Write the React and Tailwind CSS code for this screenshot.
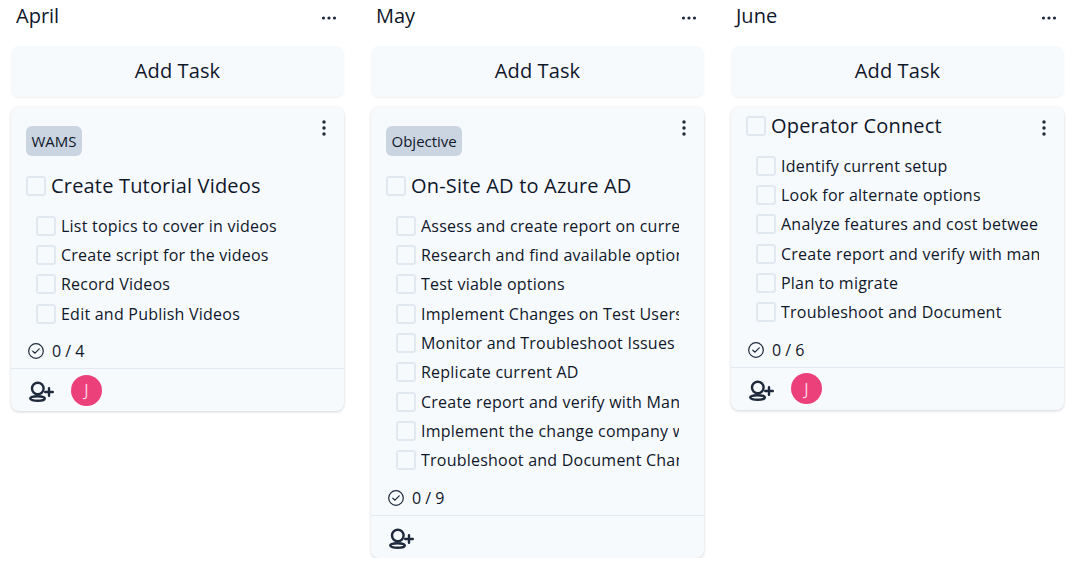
import { useState } from 'react';

const columns = [
  {
    name: 'April',
    task: {
      tag: 'WAMS',
      title: 'Create Tutorial Videos',
      items: ['List topics to cover in videos', 'Create script for the videos', 'Record Videos', 'Edit and Publish Videos'],
      assigned: true,
    },
  },
  {
    name: 'May',
    task: {
      tag: 'Objective',
      title: 'On-Site AD to Azure AD',
      items: [
        'Assess and create report on current setup',
        'Research and find available options',
        'Test viable options',
        'Implement Changes on Test Users',
        'Monitor and Troubleshoot Issues',
        'Replicate current AD',
        'Create report and verify with Management',
        'Implement the change company wide',
        'Troubleshoot and Document Changes',
      ],
      assigned: false,
    },
  },
  {
    name: 'June',
    task: {
      title: 'Operator Connect',
      items: [
        'Identify current setup',
        'Look for alternate options',
        'Analyze features and cost between',
        'Create report and verify with management',
        'Plan to migrate',
        'Troubleshoot and Document',
      ],
      assigned: true,
    },
  },
];

function Box() {
  return <span className="h-5 w-5 shrink-0 rounded-[3px] border-2 border-[#e2e8f0] bg-[#f7fafd]" />;
}

function DotsH() {
  return (
    <svg width="16" height="4" viewBox="0 0 16 4" fill="#1e293b">
      <circle cx="2.5" cy="2" r="1.6" />
      <circle cx="8" cy="2" r="1.6" />
      <circle cx="13.5" cy="2" r="1.6" />
    </svg>
  );
}

function DotsV() {
  return (
    <svg width="4" height="16" viewBox="0 0 4 16" fill="#1e293b">
      <circle cx="2" cy="2" r="1.7" />
      <circle cx="2" cy="8" r="1.7" />
      <circle cx="2" cy="14" r="1.7" />
    </svg>
  );
}

function CheckCircle() {
  return (
    <svg width="16" height="16" viewBox="0 0 16 16" fill="none" stroke="#1e293b" strokeWidth="1.2" strokeLinecap="round" strokeLinejoin="round">
      <circle cx="8" cy="8" r="7.3" />
      <path d="M4.8 8.2 7 10.2 11.2 5.8" />
    </svg>
  );
}

function UserPlus() {
  return (
    <svg width="24" height="24" viewBox="0 0 24 24" fill="none" stroke="#1e293b" strokeWidth="2.4" strokeLinecap="round" className="overflow-visible">
      <circle cx="8.8" cy="10.5" r="5.8" />
      <ellipse cx="8.5" cy="20.5" rx="7.3" ry="2.3" />
      <path d="M20 10.2v7.6M16.2 14h7.6" />
    </svg>
  );
}

function TaskCard({ task }) {
  return (
    <div className="relative rounded-lg bg-[#f7fafd] shadow-[0_1px_3px_rgba(15,23,42,0.18)]">
      <button className="absolute right-[18px] top-[13px] flex">
        <DotsV />
      </button>
      <div className="pl-[15px] pr-[25px] pt-[9px]">
        {task.tag && (
          <span className="mb-5 mt-2.5 inline-block rounded-md bg-[#cbd5e1] px-[5.5px] py-[3px] text-[15px] leading-6 text-[#0f172a]">
            {task.tag}
          </span>
        )}
        <div className="flex items-center gap-[5px] text-xl leading-5 tracking-[0.18px] text-[#0f172a]">
          <Box />
          <span>{task.title}</span>
        </div>
        <ul className="mt-[15px] flex flex-col pl-2.5">
          {task.items.map((item) => (
            <li key={item} className="flex h-[29.33px] items-center gap-[5px] text-base tracking-[0.23px] text-[#0f172a]">
              <Box />
              <span className="overflow-hidden whitespace-nowrap">{item}</span>
            </li>
          ))}
        </ul>
        <div className="mt-[11px] flex items-center gap-2 text-base leading-6 text-[#0f172a]">
          <span className="ml-[2px]">
            <CheckCircle />
          </span>
          <span>0 / {task.items.length}</span>
        </div>
      </div>
      <div className="mt-[5px] flex h-[43px] items-center gap-[18px] border-t border-[#e2e8f0] pl-[18px]">
        <UserPlus />
        {task.assigned && (
          <span className="flex h-[31px] w-[31px] items-center justify-center rounded-full bg-[#ec407a] text-base font-medium text-[#fbd5e3]">
            J
          </span>
        )}
      </div>
    </div>
  );
}

export default function App() {
  const [boards] = useState(columns);

  return (
    <div className="grid grid-cols-[333px_333px_333px] items-start gap-[27px] pl-[11px] font-['Open_Sans',sans-serif]">
      {boards.map((col) => (
        <section key={col.name}>
          <div className="flex h-8 items-center justify-between pl-[5px] pr-[7px]">
            <h2 className="text-xl text-[#0f172a]">{col.name}</h2>
            <button className="mt-[3px] flex">
              <DotsH />
            </button>
          </div>
          <button className="mt-[14px] h-[51px] w-full rounded-lg bg-[#f7fafd] pb-0.5 text-xl tracking-[0.1px] text-[#0f172a] shadow-[0_1px_2px_rgba(15,23,42,0.06)]">
            Add Task
          </button>
          <div className="mt-[10px]">
            <TaskCard task={col.task} />
          </div>
        </section>
      ))}
    </div>
  );
}
